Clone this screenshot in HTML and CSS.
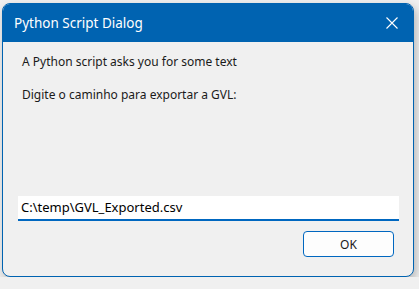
FILE: index.html
```html
<!DOCTYPE html>
<html lang="en">
<head>
  <meta charset="UTF-8" />
  <title>Python Script Dialog</title>
  <link rel="stylesheet" href="styles.css">
</head>
<body>
  <div class="window">
    <div class="titlebar">
      <span class="title">Python Script Dialog</span>
      <svg class="close" width="12" height="12" viewBox="0 0 12 12">
        <path d="M0.5 0.5 L11.5 11.5 M11.5 0.5 L0.5 11.5" stroke="#fff" stroke-width="1.1" fill="none"/>
      </svg>
    </div>
    <div class="content">
      <p class="msg">A Python script asks you for some text</p>
      <p class="msg">Digite o caminho para exportar a GVL:</p>
      <div class="spacer"></div>
      <div class="field">C:\temp\GVL_Exported.csv</div>
      <div class="actions">
        <button class="ok">OK</button>
      </div>
    </div>
  </div>
</body>
</html>
```

FILE: styles.css
```css
* {
  box-sizing: border-box;
}
body {
  margin: 0;
  background-color: #f0f0f0;
  font-family: 'Noto Sans', sans-serif;
  color: #1a1a1a;
}
.window {
  margin: 3px 0 0 2px;
  width: 412px;
  height: 274px;
  border: 1px solid #0063b1;
  border-radius: 8px;
  background-color: #f0f0f0;
  display: flex;
  flex-direction: column;
  box-shadow: 2px 4px 10px rgba(0,0,0,0.25);
  overflow: hidden;
}
.titlebar {
  height: 38px;
  background-color: #0063b1;
  color: white;
  display: flex;
  align-items: center;
  justify-content: space-between;
  padding: 0 15px 0 11px;
  flex-shrink: 0;
}
.title {
  font-size: 13.5px;
}
.content {
  flex: 1;
  display: flex;
  flex-direction: column;
  padding: 10px 14px 0 15px;
}
.msg {
  margin: 0 0 13px 4px;
  font-size: 12px;
  line-height: 20px;
}
.spacer {
  flex: 1;
}
.field {
  height: 25px;
  background-color: white;
  border-bottom: 2px solid #0067c0;
  font-size: 13px;
  line-height: 23px;
  padding-left: 3px;
  color: #000;
}
.actions {
  display: flex;
  justify-content: flex-end;
  padding: 10px 5px 19px 0;
}
.ok {
  width: 91px;
  height: 26px;
  border: 1px solid #0067c0;
  border-radius: 4px;
  background-color: #fdfdfd;
  font-family: 'Noto Sans', sans-serif;
  font-size: 12px;
  color: #1a1a1a;
  padding: 0;
}
```
